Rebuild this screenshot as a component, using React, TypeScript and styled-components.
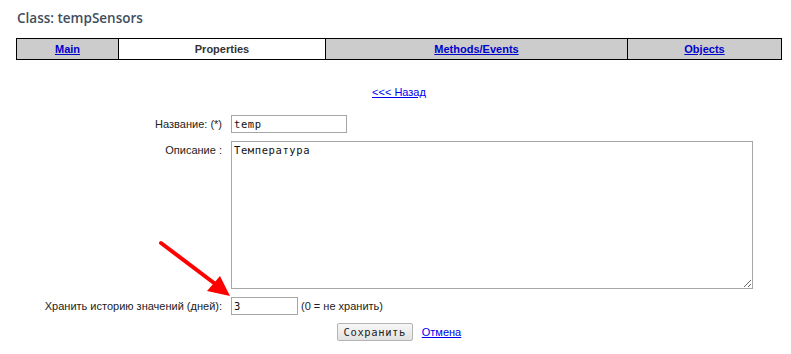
import React from "react"
import styled, { createGlobalStyle } from "styled-components"

const GlobalStyle = createGlobalStyle`
  html, body {
    margin: 0;
    padding: 0;
    background: #ffffff;
  }
  body {
    font-family: "Liberation Sans", Arial, sans-serif;
    font-size: 11px;
    color: #222;
  }
`

const Page = styled.div`
  position: relative;
  width: 791px;
  height: 354px;
  overflow: hidden;
`

const Title = styled.h1`
  margin: 0;
  padding: 9px 0 0 17px;
  height: 20px;
  font-family: "Open Sans", sans-serif;
  font-size: 13.5px;
  font-weight: 600;
  color: #3f4e5d;
  line-height: 18px;
`

const Tabs = styled.div`
  margin: 9px 0 0 16px;
  width: 766px;
  height: 22px;
  box-sizing: border-box;
  display: grid;
  grid-template-columns: 101px 207px 302px 1fr;
  border: 1px solid #000;
`

const Tab = styled.div<{ $active?: boolean; $first?: boolean }>`
  display: flex;
  align-items: center;
  justify-content: center;
  background: ${p => (p.$active ? "#ffffff" : "#cccccc")};
  border-left: ${p => (p.$first ? "none" : "1px solid #000")};
  font-weight: bold;
  font-size: 11px;
  color: #333;
`

const TabLink = styled.a`
  color: #0000cc;
  text-decoration: underline;
`

const Content = styled.div`
  margin-left: 16px;
  width: 766px;
`

const BackRow = styled.div`
  margin-top: 26px;
  height: 13px;
  text-align: center;
  line-height: 13px;
`

const Link = styled.a`
  color: #0000ee;
  text-decoration: underline;
  font-size: 11px;
`

const Form = styled.div`
  margin-top: 16px;
  display: grid;
  grid-template-columns: 206px 1fr;
  column-gap: 9px;
  row-gap: 8px;
`

const Label = styled.div<{ $top?: boolean }>`
  text-align: right;
  color: #222;
  font-size: 11px;
  display: flex;
  justify-content: flex-end;
  align-items: ${p => (p.$top ? "flex-start" : "center")};
  padding-top: ${p => (p.$top ? "3px" : "0")};
`

const Field = styled.div`
  display: flex;
  align-items: center;
  gap: 3px;
  color: #222;
`

const TextInput = styled.input<{ $w: number }>`
  box-sizing: border-box;
  width: ${p => p.$w}px;
  height: 18px;
  margin: 0;
  padding: 0 2px;
  border: 1px solid #a6a6a6;
  font-family: "DejaVu Sans Mono", monospace;
  font-size: 10.5px;
  letter-spacing: 0.6px;
  color: #111;
  outline: none;
`

const TextArea = styled.textarea`
  box-sizing: border-box;
  width: 522px;
  height: 148px;
  margin: 0;
  padding: 2px 2px;
  border: 1px solid #a6a6a6;
  font-family: "DejaVu Sans Mono", monospace;
  font-size: 10.5px;
  letter-spacing: 0.6px;
  color: #111;
  outline: none;
  resize: both;
`

const Actions = styled.div`
  margin-top: 8px;
  display: flex;
  justify-content: center;
  align-items: center;
  gap: 9px;
`

const Button = styled.button`
  box-sizing: border-box;
  width: 76px;
  height: 18px;
  padding: 0;
  border: 1px solid #b4b4b4;
  border-radius: 2px;
  background: linear-gradient(#f7f7f7, #e2e2e2);
  font-family: "DejaVu Sans Mono", monospace;
  font-size: 10.5px;
  letter-spacing: 0.6px;
  color: #222;
`

const Arrow = styled.svg`
  position: absolute;
  left: 0;
  top: 0;
  pointer-events: none;
`

export default function App() {
  return (
    <Page>
      <GlobalStyle />
      <Title>Class: tempSensors</Title>
      <Tabs>
        <Tab $first>
          <TabLink href="#">Main</TabLink>
        </Tab>
        <Tab $active>Properties</Tab>
        <Tab>
          <TabLink href="#">Methods/Events</TabLink>
        </Tab>
        <Tab>
          <TabLink href="#">Objects</TabLink>
        </Tab>
      </Tabs>
      <Content>
        <BackRow>
          <Link href="#">&lt;&lt;&lt; Назад</Link>
        </BackRow>
        <Form>
          <Label>Название: (*)</Label>
          <Field>
            <TextInput $w={116} defaultValue="temp" />
          </Field>
          <Label $top>Описание :</Label>
          <Field>
            <TextArea defaultValue="Температура" />
          </Field>
          <Label>Хранить историю значений (дней):</Label>
          <Field>
            <TextInput $w={67} defaultValue="3" />
            <span>(0 = не хранить)</span>
          </Field>
        </Form>
        <Actions>
          <Button>Сохранить</Button>
          <Link href="#">Отмена</Link>
        </Actions>
      </Content>
      <Arrow width="791" height="354" viewBox="0 0 791 354">
        <line x1="161" y1="243" x2="214" y2="283" stroke="#ff0000" strokeWidth="4" strokeLinecap="round" />
        <polygon points="230,296 207,291 220,276" fill="#ff0000" />
      </Arrow>
    </Page>
  )
}
